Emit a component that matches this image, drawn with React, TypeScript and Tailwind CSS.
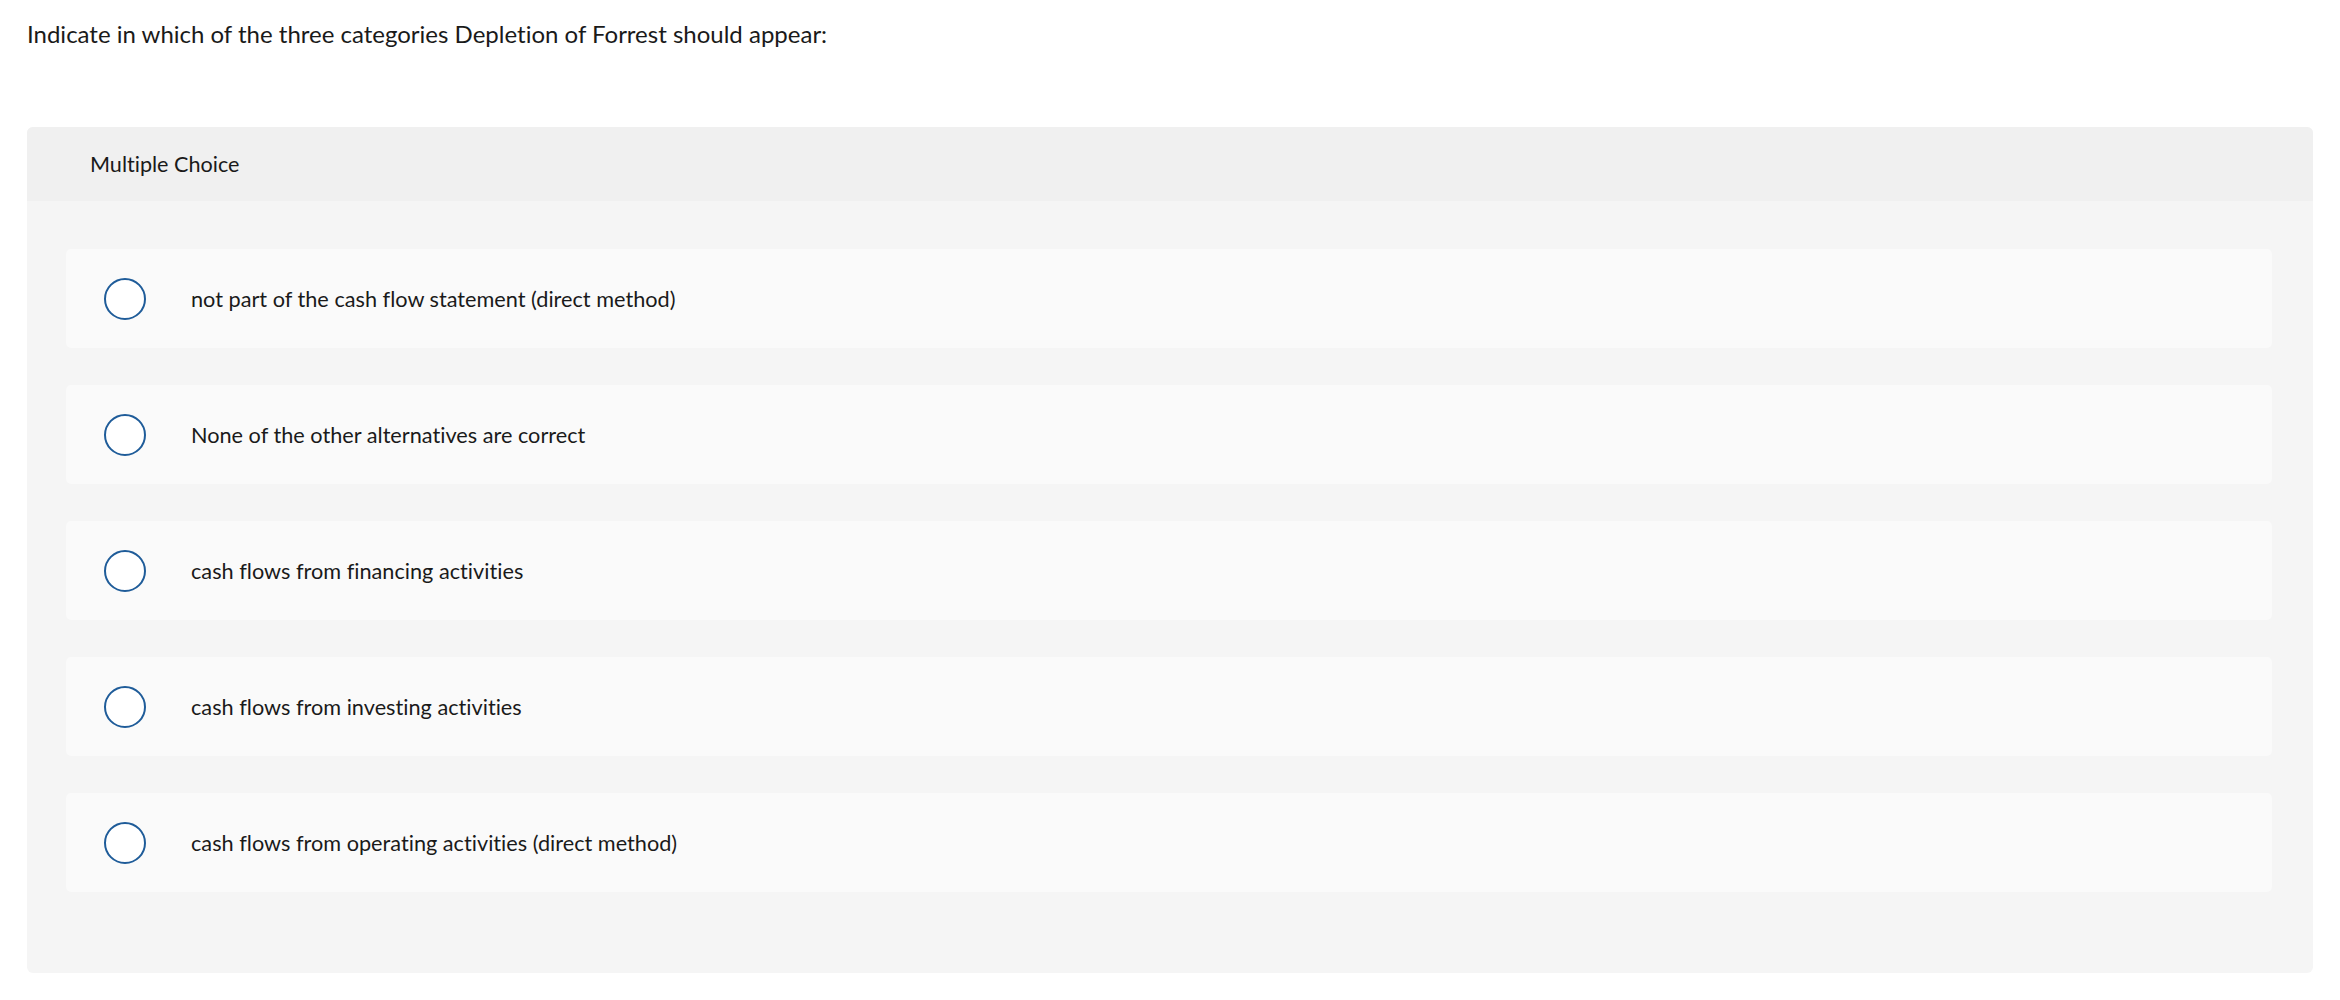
const options = [
  "not part of the cash flow statement (direct method)",
  "None of the other alternatives are correct",
  "cash flows from financing activities",
  "cash flows from investing activities",
  "cash flows from operating activities (direct method)",
];

export default function App() {
  return (
    <div className="min-h-screen bg-white px-[27px] pt-[20px] text-[#1a1a1a] font-['Lato',sans-serif] [font-variant-ligatures:none]">
      {/* Question prompt */}
      <p className="text-[24px] leading-[28px]">
        Indicate in which of the three categories Depletion of Forrest should appear:
      </p>

      {/* Multiple choice panel */}
      <div className="mt-[79px] w-[2286px] rounded-[6px] overflow-hidden bg-[#f5f5f5]">
        <div className="h-[74px] bg-[#f0f0f0] flex items-center pl-[63px] text-[21.6px]">
          Multiple Choice
        </div>
        <div className="pt-[48px] pb-[81px] pl-[39px] pr-[41px] flex flex-col gap-[37px]">
          {options.map((label) => (
            <label
              key={label}
              className="h-[99px] rounded-[5px] bg-[#fafafa] flex items-center pl-[38px] cursor-pointer"
            >
              <span className="w-[42px] h-[42px] rounded-full border-[2.5px] border-[#1f5c99] bg-white shrink-0" />
              <span className="ml-[45px] text-[21.7px] leading-[28px]">{label}</span>
            </label>
          ))}
        </div>
      </div>
    </div>
  );
}
